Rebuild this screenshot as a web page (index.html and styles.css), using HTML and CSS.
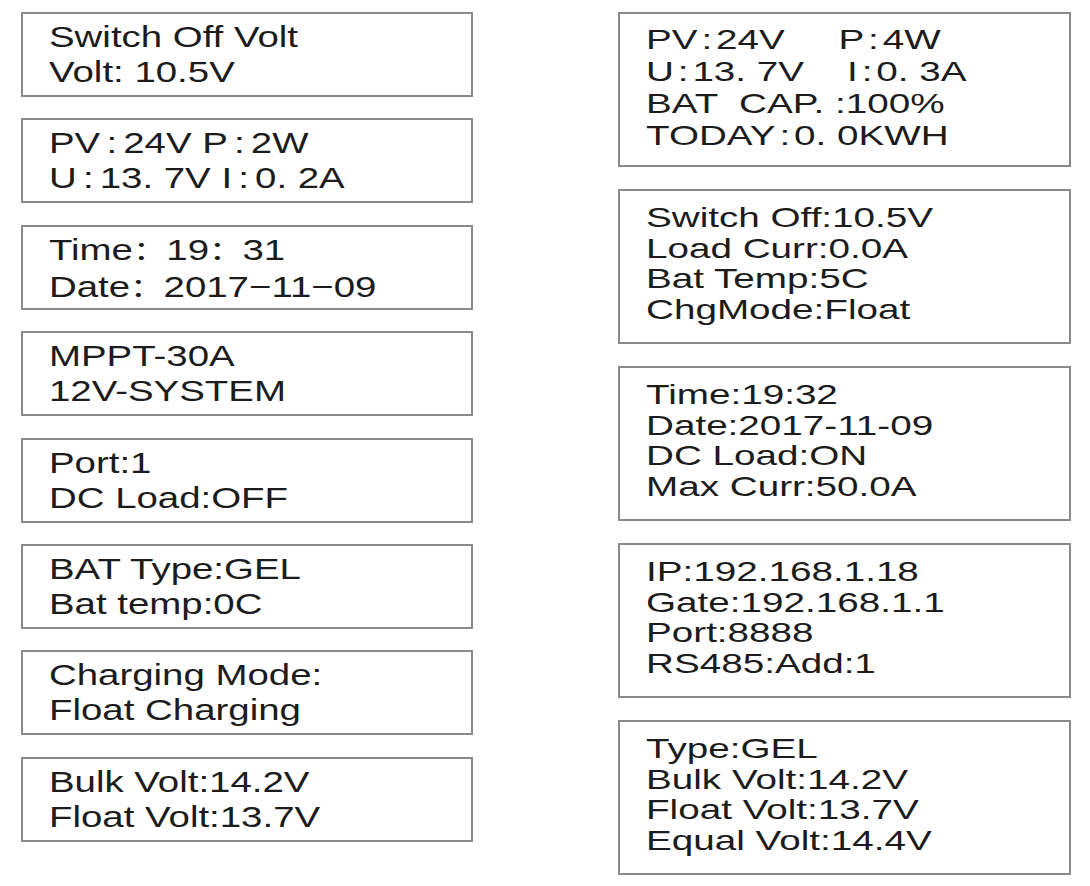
FILE: index.html
```html
<!DOCTYPE html>
<html lang="en">
<head>
<meta charset="utf-8">
<title>MPPT Controller LCD Screens</title>
<link rel="stylesheet" href="styles.css">
</head>
<body>
<main class="sheet">
  <section class="col col-left">
    <div class="panel panel-sm"><div class="lines"><div class="line">Switch Off Volt</div><div class="line">Volt: 10.5V</div></div></div>
    <div class="panel panel-sm"><div class="lines"><div class="line">PV<span class="colon-wide">:</span>24V P<span class="colon-wide">:</span>2W</div><div class="line">U<span class="colon-wide">:</span>13. 7V I<span class="colon-wide">:</span>0. 2A</div></div></div>
    <div class="panel panel-sm"><div class="lines"><div class="line">Time<span class="fw-colon">：</span>19<span class="fw-colon">：</span>31</div><div class="line">Date<span class="fw-colon">：</span>2017<span class="dash">−</span>11<span class="dash">−</span>09</div></div></div>
    <div class="panel panel-sm"><div class="lines"><div class="line">MPPT-30A</div><div class="line">12V-SYSTEM</div></div></div>
    <div class="panel panel-sm"><div class="lines"><div class="line">Port:1</div><div class="line">DC Load:OFF</div></div></div>
    <div class="panel panel-sm"><div class="lines"><div class="line">BAT Type:GEL</div><div class="line">Bat temp:0C</div></div></div>
    <div class="panel panel-sm"><div class="lines"><div class="line">Charging Mode:</div><div class="line">Float Charging</div></div></div>
    <div class="panel panel-sm"><div class="lines"><div class="line">Bulk Volt:14.2V</div><div class="line">Float Volt:13.7V</div></div></div>
  </section>
  <section class="col col-right">
    <div class="panel panel-lg panel-first"><div class="lines"><div class="line">PV<span class="colon-mid">:</span>24V     P<span class="colon-mid">:</span>4W</div><div class="line">U<span class="colon-mid">:</span>13. 7V    I<span class="colon-mid">:</span>0. 3A</div><div class="line">BAT  CAP. :100%</div><div class="line">TODAY<span class="colon-mid">:</span>0. 0KWH</div></div></div>
    <div class="panel panel-lg"><div class="lines"><div class="line">Switch Off:10.5V</div><div class="line">Load Curr:0.0A</div><div class="line">Bat Temp:5C</div><div class="line">ChgMode:Float</div></div></div>
    <div class="panel panel-lg"><div class="lines"><div class="line">Time:19:32</div><div class="line">Date:2017-11-09</div><div class="line">DC Load:ON</div><div class="line">Max Curr:50.0A</div></div></div>
    <div class="panel panel-lg"><div class="lines"><div class="line">IP:192.168.1.18</div><div class="line">Gate:192.168.1.1</div><div class="line">Port:8888</div><div class="line">RS485:Add:1</div></div></div>
    <div class="panel panel-lg"><div class="lines"><div class="line">Type:GEL</div><div class="line">Bulk Volt:14.2V</div><div class="line">Float Volt:13.7V</div><div class="line">Equal Volt:14.4V</div></div></div>
  </section>
</main>
</body>
</html>
```

FILE: styles.css
```css
html, body {
  margin: 0;
  padding: 0;
  background: #ffffff;
}

body {
  font-family: "Liberation Sans", Arial, "Noto Sans CJK SC", sans-serif;
  color: #1c1c1c;
}

.sheet {
  display: flex;
  align-items: flex-start;
  gap: 145px;
  padding: 12px 0 0 21px;
}

.col {
  display: flex;
  flex-direction: column;
}

.col-left {
  width: 452px;
  gap: 21.4px;
}

.col-right {
  width: 453px;
  gap: 22px;
}

.panel {
  box-sizing: border-box;
  border: 2px solid #8a8a8a;
  background: #ffffff;
  overflow: hidden;
}

.lines {
  transform-origin: 0 0;
  white-space: pre;
}

.panel-sm {
  height: 85px;
  padding: 5px 0 0 26px;
  font-size: 30px;
  line-height: 35px;
}

.panel-sm .lines {
  transform: scaleX(1.28);
}

.panel-lg {
  height: 155px;
  padding: 12px 0 0 26px;
  font-size: 28px;
  line-height: 30.5px;
}

.panel-lg .lines {
  transform: scaleX(1.38);
}

.panel-first {
  padding-top: 10px;
  line-height: 32px;
}

.colon-wide {
  padding: 0 0.16em;
}

.colon-mid {
  padding: 0 0.1em;
}

.fw-colon {
  font-size: 0.87em;
}
```
